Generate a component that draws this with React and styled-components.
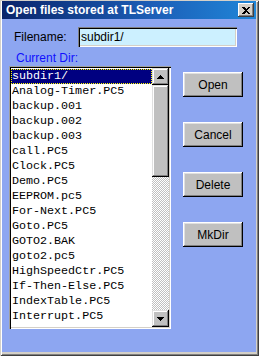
import React from "react";
import styled, { createGlobalStyle } from "styled-components";

const Global = createGlobalStyle`
  html, body { margin: 0; padding: 0; background: #8da6f1; }
  #root { width: 259px; height: 356px; }
`;

const Window = styled.div`
  box-sizing: border-box;
  width: 259px;
  height: 356px;
  padding: 1px 3px 4px 2px;
  background: #d4d0c8;
  box-shadow: inset 1px 1px #d4d0c8, inset -1px -1px #404040,
    inset 2px 2px #ffffff, inset -2px -2px #808080;
  display: flex;
  flex-direction: column;
  font-family: "Liberation Sans", Arial, sans-serif;
`;

const TitleBar = styled.div`
  height: 18px;
  flex: none;
  display: flex;
  align-items: center;
  padding: 0 2px 0 4px;
  background: linear-gradient(90deg, #0a246a 0%, #1c5fb8 60%, #1f86d8 100%);
`;

const Title = styled.div`
  flex: 1;
  color: #fff;
  font-weight: bold;
  font-size: 12px;
  line-height: 14px;
  white-space: nowrap;
`;

const CloseButton = styled.div`
  width: 16px;
  height: 14px;
  background: #d4d0c8;
  box-shadow: inset -1px -1px #404040, inset 1px 1px #ffffff,
    inset -2px -2px #808080;
  display: flex;
  align-items: center;
  justify-content: center;
`;

const Body = styled.div`
  flex: 1;
  background: #8da6f1;
  padding: 8px 0 0 7px;
  display: flex;
  flex-direction: column;
`;

const FilenameRow = styled.div`
  display: flex;
  align-items: center;
  margin-left: 5px;
`;

const Label = styled.div`
  width: 64px;
  font-size: 12px;
  color: #000;
`;

const TextInput = styled.div`
  box-sizing: border-box;
  width: 159px;
  height: 20px;
  background: #ccf0ff;
  box-shadow: inset 1px 1px #808080, inset 2px 2px #000,
    inset -1px -1px #ffffff, inset -2px -2px #d4d0c8;
  padding: 0 0 0 3px;
  font-size: 12px;
  line-height: 20px;
  color: #000;
`;

const DirLabel = styled.div`
  margin: 4px 0 1px 7px;
  font-size: 12px;
  line-height: 14px;
  color: #1010ff;
`;

const MainRow = styled.div`
  display: flex;
  align-items: flex-start;
  gap: 12px;
`;

const ListBox = styled.div`
  box-sizing: border-box;
  width: 162px;
  height: 263px;
  padding: 2px;
  background: #fff;
  box-shadow: inset 1px 1px #a0a0a0, inset 2px 2px #000,
    inset -1px -1px #ffffff, inset -2px -2px #d4d0c8;
  display: flex;
`;

const Items = styled.div`
  flex: 1;
  overflow: hidden;
  padding-top: 1px;
`;

const Item = styled.div`
  height: 15px;
  line-height: 15px;
  padding-left: 1px;
  font-family: "Liberation Mono", "Courier New", monospace;
  font-size: 11.7px;
  white-space: nowrap;
  color: ${(p) => (p.$selected ? "#fff" : "#000")};
  background: ${(p) => (p.$selected ? "#000080" : "transparent")};
  outline: ${(p) => (p.$selected ? "1px dotted #ffff00" : "none")};
  outline-offset: -1px;
`;

const ScrollBar = styled.div`
  width: 17px;
  display: flex;
  flex-direction: column;
`;

const ScrollButton = styled.div`
  height: 17px;
  flex: none;
  background: #c0c0c0;
  box-shadow: inset -1px -1px #000, inset 1px 1px #e0e0e0,
    inset -2px -2px #808080, inset 2px 2px #ffffff;
  display: flex;
  align-items: center;
  justify-content: center;
`;

const Thumb = styled.div`
  height: 92px;
  flex: none;
  background: #c0c0c0;
  box-shadow: inset -1px -1px #000, inset 1px 1px #e0e0e0,
    inset -2px -2px #808080, inset 2px 2px #ffffff;
`;

const Track = styled.div`
  flex: 1;
  background-image: conic-gradient(
    #ffffff 25%,
    #c0c0c0 0 50%,
    #ffffff 0 75%,
    #c0c0c0 0
  );
  background-size: 2px 2px;
`;

const ButtonColumn = styled.div`
  display: flex;
  flex-direction: column;
  gap: 25px;
  margin-top: 6px;
`;

const Button = styled.div`
  box-sizing: border-box;
  width: 60px;
  height: 25px;
  background: #c0c0c0;
  box-shadow: inset -1px -1px #000, inset 1px 1px #ffffff,
    inset -2px -2px #808080, inset 2px 2px #e0e0e0;
  display: flex;
  align-items: center;
  justify-content: center;
  font-size: 12px;
  color: #000;
`;

const Arrow = ({ down }) => (
  <svg width="7" height="4" viewBox="0 0 7 4">
    <path
      d={down ? "M0 0h7L3.5 4z" : "M3.5 0L7 4H0z"}
      fill="#000"
      shapeRendering="crispEdges"
    />
  </svg>
);

const files = [
  "subdir1/",
  "Analog-Timer.PC5",
  "backup.001",
  "backup.002",
  "backup.003",
  "call.PC5",
  "Clock.PC5",
  "Demo.PC5",
  "EEPROM.pc5",
  "For-Next.PC5",
  "Goto.PC5",
  "GOTO2.BAK",
  "goto2.pc5",
  "HighSpeedCtr.PC5",
  "If-Then-Else.PC5",
  "IndexTable.PC5",
  "Interrupt.PC5",
];

export default function App() {
  return (
    <>
      <Global />
      <Window>
        <TitleBar>
          <Title>Open files stored at TLServer</Title>
          <CloseButton>
            <svg width="8" height="7" viewBox="0 0 8 7">
              <path
                d="M0 0h2l2 2 2-2h2L5 3.5 8 7H6L4 5 2 7H0l3-3.5z"
                fill="#000"
                shapeRendering="crispEdges"
              />
            </svg>
          </CloseButton>
        </TitleBar>
        <Body>
          <FilenameRow>
            <Label>Filename:</Label>
            <TextInput>subdir1/</TextInput>
          </FilenameRow>
          <DirLabel>Current Dir:</DirLabel>
          <MainRow>
            <ListBox>
              <Items>
                {files.map((f, i) => (
                  <Item key={f} $selected={i === 0}>
                    {f}
                  </Item>
                ))}
              </Items>
              <ScrollBar>
                <ScrollButton>
                  <Arrow />
                </ScrollButton>
                <Thumb />
                <Track />
                <ScrollButton>
                  <Arrow down />
                </ScrollButton>
              </ScrollBar>
            </ListBox>
            <ButtonColumn>
              <Button>Open</Button>
              <Button>Cancel</Button>
              <Button>Delete</Button>
              <Button>MkDir</Button>
            </ButtonColumn>
          </MainRow>
        </Body>
      </Window>
    </>
  );
}
